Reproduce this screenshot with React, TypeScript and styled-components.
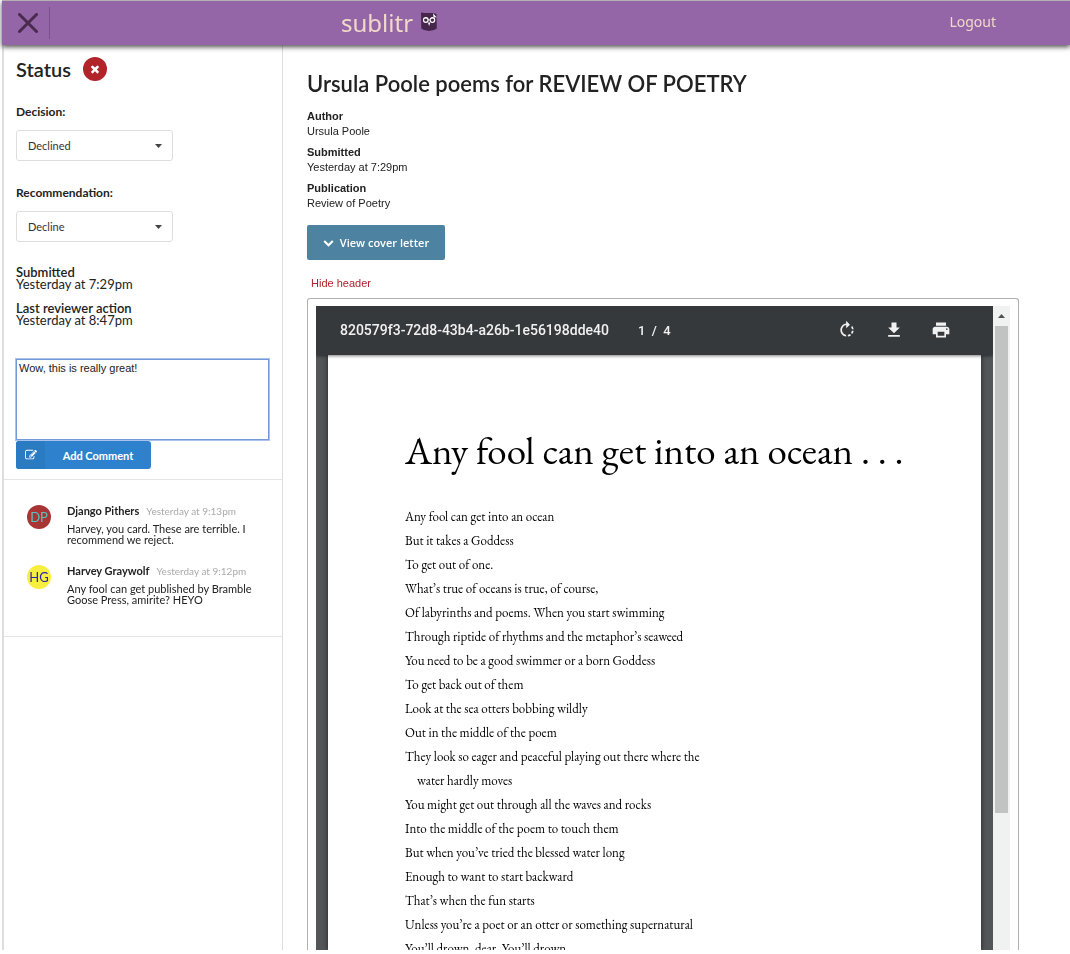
import React, { useEffect, useRef, useState } from "react";
import styled, { createGlobalStyle } from "styled-components";

const GlobalStyle = createGlobalStyle`
  *, *::before, *::after { box-sizing: border-box; }
  body {
    margin: 0;
    background: #fff;
    color: #222;
    font-family: Lato, sans-serif;
    font-size: 11px;
  }
  h1, h2, h3, p, dl, dt, dd, ul { margin: 0; padding: 0; }
  ul { list-style: none; }
  button { border: 0; padding: 0; background: none; color: inherit; font: inherit; cursor: pointer; }
`;

const Page = styled.div`
  display: flex;
  flex-direction: column;
  height: 100vh;
  padding: 0 0 4px 2px;
  overflow: hidden;
`;

const TopBar = styled.header`
  flex: none;
  z-index: 1;
  display: grid;
  grid-template-columns: 339px 1fr auto;
  align-items: center;
  height: 45px;
  padding-right: 74px;
  border-top: 1px solid #b3b0b3;
  background: #9466a8;
  box-shadow: 0 2px 5px rgba(0, 0, 0, 0.7);
  color: #f1d9c9;
  font-family: "Noto Sans", sans-serif;
`;

const CloseButton = styled.button`
  display: flex;
  align-items: center;
  justify-self: start;
  width: 48px;
  height: 32px;
  padding-left: 16px;
  border-right: 1px solid #7b4f8d;
  color: #4a2a4f;
`;

const Brand = styled.a`
  display: flex;
  align-items: center;
  gap: 8px;
  color: inherit;
  font-size: 24px;
  line-height: 32px;
  text-decoration: none;

  > svg { margin-bottom: 4px; }
`;

const LogoutLink = styled.a`
  padding-bottom: 4px;
  color: inherit;
  font-size: 14px;
  text-decoration: none;
`;

const Body = styled.div`
  flex: 1;
  min-height: 0;
  display: flex;
`;

const Sidebar = styled.aside`
  flex: none;
  width: 281px;
  border-left: 2px solid #dededf;
  border-right: 1px solid #dededf;
`;

const SidebarSection = styled.section`
  padding: 11px 12px 10px;
  border-bottom: 1px solid #e4e5e6;
`;

const StatusRow = styled.div`
  display: flex;
  align-items: center;
  gap: 12px;
  height: 26px;
`;

const StatusTitle = styled.h2`
  font-size: 20px;
  font-weight: 600;
  line-height: 24px;
`;

const StatusBadge = styled.span`
  display: flex;
  align-items: center;
  justify-content: center;
  width: 24px;
  height: 24px;
  border-radius: 50%;
  background: #b0242a;
  color: #fff;
`;

const Fields = styled.div`
  display: flex;
  flex-direction: column;
  gap: 24px;
  padding: 22px 0 24px;
`;

const Field = styled.div`
  display: flex;
  flex-direction: column;
  align-items: flex-start;
  gap: 10px;
`;

const FieldLabel = styled.label`
  font-size: 12px;
  font-weight: 700;
  line-height: 16px;
`;

const SelectBox = styled.div`
  display: grid;
  align-items: center;
  width: 157px;
  height: 31px;

  > * { grid-area: 1 / 1; }
  > svg { justify-self: end; margin-right: 11px; pointer-events: none; }
`;

const Select = styled.select`
  appearance: none;
  width: 100%;
  height: 100%;
  padding: 0 11px;
  border: 1px solid #dededf;
  border-radius: 3px;
  background: #fff;
  color: #333;
  font-family: Lato, sans-serif;
  font-size: 11px;
`;

const Dates = styled.dl`
  display: flex;
  flex-direction: column;
  gap: 12px;
  margin-bottom: 33px;
  font-size: 13px;
  line-height: 12px;

  dt { font-weight: 600; }
`;

const CommentForm = styled.form`
  display: flex;
  flex-direction: column;
  align-items: flex-start;
  gap: 1px;
`;

const CommentBox = styled.textarea`
  display: block;
  width: 253px;
  height: 81px;
  padding: 1px 2px;
  border: 1px solid #7499d9;
  box-shadow: 0 0 0 1px #a9c3ee;
  outline: 0;
  resize: none;
  color: #222;
  font-family: "Liberation Sans", Arial, sans-serif;
  font-size: 11px;
  line-height: 14px;
`;

const AddButton = styled.button`
  display: flex;
  width: 135px;
  height: 28px;
  border-radius: 3px;
  overflow: hidden;
  background: #2e82cd;
  color: #fff;
  font-weight: 700;

  > span {
    display: flex;
    align-items: center;
    justify-content: center;
  }
`;

const AddIcon = styled.span`
  width: 29px;
  background: #2b7bc3;
`;

const AddText = styled.span`
  flex: 1;
`;

const Comments = styled.ul`
  display: flex;
  flex-direction: column;
  gap: 18px;
  padding: 23px 20px 31px 23px;
  border-bottom: 1px solid #e4e5e6;
`;

const Comment = styled.li`
  display: flex;
  align-items: flex-start;
  gap: 16px;
`;

const Avatar = styled.span<{ $bg: string; $fg: string }>`
  flex: none;
  width: 24px;
  margin-top: 2px;
  border-radius: 50%;
  background: ${(p) => p.$bg};
  color: ${(p) => p.$fg};
  font-size: 13px;
  line-height: 24px;
  text-align: center;
`;

const CommentHead = styled.div`
  display: flex;
  align-items: baseline;
  gap: 7px;
  line-height: 16px;
  white-space: nowrap;
`;

const CommentTime = styled.time`
  color: #aaa;
  font-size: 10px;
`;

const CommentText = styled.p`
  margin-top: 4px;
  line-height: 11px;
`;

const Main = styled.main`
  flex: 1;
  min-width: 0;
  display: flex;
  flex-direction: column;
  align-items: flex-start;
  padding: 23px 51px 0 24px;
  font-family: "Liberation Sans", Arial, sans-serif;
`;

const Title = styled.h1`
  font-family: Lato, sans-serif;
  font-size: 22px;
  line-height: 32px;
  font-weight: 600;
`;

const Details = styled.dl`
  display: flex;
  flex-direction: column;
  gap: 6px;
  margin: 9px 0 14px;
  line-height: 15px;

  dt { font-weight: 700; }
`;

const LetterButton = styled.button`
  flex: none;
  display: flex;
  align-items: center;
  justify-content: center;
  gap: 6px;
  width: 138px;
  height: 35px;
  border-radius: 2px;
  background: #4d82a1;
  color: #fff;
  font-family: "Open Sans", sans-serif;
  font-weight: 600;
`;

const HideButton = styled.button`
  margin: 15px 0 7px 4px;
  color: #b0242a;
  line-height: 16px;
`;

const Frame = styled.div`
  flex: 1;
  align-self: stretch;
  min-height: 0;
  display: flex;
  padding: 7px 8px 0;
  border: 1px solid #b0b0b0;
  border-bottom: 0;
  border-radius: 3px 3px 0 0;
`;

const Viewer = styled.div`
  flex: 1;
  min-width: 0;
  display: flex;
  flex-direction: column;
  overflow: hidden;
  background: #525659;
`;

const Toolbar = styled.div`
  flex: none;
  z-index: 1;
  display: flex;
  align-items: center;
  height: 49px;
  padding: 0 42px 1px 24px;
  background: #36393c;
  box-shadow: 0 1px 3px rgba(0, 0, 0, 0.5);
  color: #f1f1f1;
  font-family: Roboto, sans-serif;
  font-size: 14px;
`;

const FileName = styled.span`
  font-weight: 500;
`;

const PageCount = styled.span`
  margin-left: 29px;
  font-size: 13px;
  font-weight: 500;
  white-space: pre;
`;

const Tools = styled.div`
  display: flex;
  gap: 27px;
  margin-left: auto;

  button, svg { display: block; }
`;

const Sheet = styled.article`
  flex: 1;
  min-height: 0;
  margin: 0 12px;
  padding: 76px 77px 0;
  overflow: hidden;
  background: #fff;
  box-shadow: 0 0 5px rgba(0, 0, 0, 0.6);
  color: #000;
  font-family: "EB Garamond", Garamond, "Liberation Serif", serif;
  white-space: nowrap;
`;

const PoemTitle = styled.h2`
  margin-bottom: 34px;
  font-size: 39px;
  font-weight: 400;
  line-height: 40px;
`;

const Line = styled.p<{ $indent?: boolean }>`
  padding-left: ${(p) => (p.$indent ? 12 : 0)}px;
  font-size: 13px;
  line-height: 24px;
`;

const Scrollbar = styled.div`
  flex: none;
  display: flex;
  flex-direction: column;
  align-items: center;
  width: 17px;
  background: #f0f1f1;
`;

const ScrollUp = styled.button`
  display: flex;
  align-items: center;
  justify-content: center;
  width: 100%;
  height: 20px;
`;

const Thumb = styled.div`
  width: 13px;
  height: 487px;
  background: #c1c2c2;
`;

const TIMES =
  "M1490 1322q0 40-28 68l-136 136q-28 28-68 28t-68-28l-294-294-294 294q-28 28-68 28t-68-28l-136-136q-28-28-28-68t28-68l294-294-294-294q-28-28-28-68t28-68l136-136q28-28 68-28t68 28l294 294 294-294q28-28 68-28t68 28l136 136q28 28 28 68t-28 68l-294 294 294 294q28 28 28 68z";
const CHEVRON =
  "M1683 808l-742 741q-19 19-45 19t-45-19l-742-741q-19-19-19-45.5t19-45.5l166-165q19-19 45-19t45 19l531 531 531-531q19-19 45-19t45 19l166 165q19 19 19 45.5t-19 45.5z";
const EDIT =
  "M888 1184l116-116-152-152-116 116v56h96v96h56zm440-720q-16-16-33 1l-350 350q-17 17-1 33t33-1l350-350q17-17 1-33zm80 594v190q0 119-84.5 203.5t-203.5 84.5h-832q-119 0-203.5-84.5t-84.5-203.5v-832q0-119 84.5-203.5t203.5-84.5h832q63 0 117 25 15 7 18 23 3 17-9 29l-49 49q-14 14-32 8-23-6-45-6h-832q-66 0-113 47t-47 113v832q0 66 47 113t113 47h832q66 0 113-47t47-113v-126q0-13 9-22l64-64q15-15 35-7t20 29zm-96-738l288 288-672 672h-288v-288zm444 132l-92 92-288-288 92-92q28-28 68-28t68 28l152 152q28 28 28 68t-28 68z";
const ROTATE =
  "M15.55 5.55L11 1v3.07C7.06 4.56 4 7.92 4 12s3.05 7.44 7 7.93v-2.02c-2.84-.48-5-2.94-5-5.91s2.16-5.43 5-5.91V10l4.55-4.45zM19.93 11c-.17-1.39-.72-2.73-1.62-3.89l-1.42 1.42c.54.75.88 1.6 1.02 2.47h2.02zM13 17.9v2.02c1.39-.17 2.74-.71 3.9-1.61l-1.44-1.44c-.75.54-1.59.89-2.46 1.03zm3.89-2.42l1.42 1.41c.9-1.16 1.45-2.5 1.62-3.89h-2.02c-.14.87-.48 1.72-1.02 2.48z";
const DOWNLOAD = "M19 9h-4V3H9v6H5l7 7 7-7zM5 18v2h14v-2H5z";
const PRINT =
  "M19 8H5c-1.66 0-3 1.34-3 3v6h4v4h12v-4h4v-6c0-1.66-1.34-3-3-3zm-3 11H8v-5h8v5zm3-7c-.55 0-1-.45-1-1s.45-1 1-1 1 .45 1 1-.45 1-1 1zm-1-9H6v4h12V3z";

function Icon({ d, size, box = 24 }: { d: string; size: number; box?: number }) {
  return (
    <svg width={size} height={size} viewBox={`0 0 ${box} ${box}`} fill="currentColor" aria-hidden="true">
      <path d={d} />
    </svg>
  );
}

function Owl() {
  return (
    <svg width="16" height="19" viewBox="0 0 16 19" aria-hidden="true">
      <path d="M0 .6 4 1h8l3.500 1 .3 14.500L13 18l-5 1-5-1-2.700-1.500z" fill="#46264b" />
      <path d="M12 1.200 15.800 5.600 12.500 5z" fill="#fff" />
      <g fill="none" stroke="#fff" strokeWidth="1.200">
        <circle cx="4.800" cy="8" r="2.300" />
        <circle cx="11.400" cy="8" r="2.300" />
        <path d="M2 6.300 6 6.100 8 8.500 10 6.100 14 6.300" strokeWidth=".6" />
      </g>
      <path d="M6.900 10.500h2.400L8.100 14z" fill="#fff" />
    </svg>
  );
}

function Dropdown({ id, label, options }: { id: string; label: string; options: string[] }) {
  return (
    <Field>
      <FieldLabel htmlFor={id}>{label}</FieldLabel>
      <SelectBox>
        <Select id={id} defaultValue={options[0]}>
          {options.map((o) => (
            <option key={o}>{o}</option>
          ))}
        </Select>
        <svg width="7" height="4" viewBox="0 0 7 4" aria-hidden="true">
          <path d="M0 0h7L3.500 4z" fill="#444" />
        </svg>
      </SelectBox>
    </Field>
  );
}

const comments = [
  { initials: "DP", bg: "#a93434", fg: "#58c4c0", name: "Django Pithers", time: "Yesterday at 9:13pm", text: "Harvey, you card. These are terrible. I recommend we reject." },
  { initials: "HG", bg: "#f8ee40", fg: "#2c1fb5", name: "Harvey Graywolf", time: "Yesterday at 9:12pm", text: "Any fool can get published by Bramble Goose Press, amirite? HEYO" },
];

const details = [
  ["Author", "Ursula Poole"],
  ["Submitted", "Yesterday at 7:29pm"],
  ["Publication", "Review of Poetry"],
];

const poem = [
  "Any fool can get into an ocean",
  "But it takes a Goddess",
  "To get out of one.",
  "What’s true of oceans is true, of course,",
  "Of labyrinths and poems. When you start swimming",
  "Through riptide of rhythms and the metaphor’s seaweed",
  "You need to be a good swimmer or a born Goddess",
  "To get back out of them",
  "Look at the sea otters bobbing wildly",
  "Out in the middle of the poem",
  "They look so eager and peaceful playing out there where the",
  ">water hardly moves",
  "You might get out through all the waves and rocks",
  "Into the middle of the poem to touch them",
  "But when you’ve tried the blessed water long",
  "Enough to want to start backward",
  "That’s when the fun starts",
  "Unless you’re a poet or an otter or something supernatural",
  "You’ll drown, dear. You’ll drown",
];

export default function App() {
  const [draft, setDraft] = useState("Wow, this is really great!");
  const box = useRef<HTMLTextAreaElement>(null);

  useEffect(() => {
    const el = box.current;
    if (el) {
      el.focus();
      el.setSelectionRange(el.value.length, el.value.length);
    }
  }, []);

  return (
    <Page>
      <GlobalStyle />
      <TopBar>
        <CloseButton aria-label="Close">
          <svg width="20" height="20" viewBox="0 0 20 20" fill="none" stroke="currentColor" strokeWidth="3" strokeLinecap="round" aria-hidden="true">
            <path d="M1.500 1.500l17 17M18.500 1.500l-17 17" />
          </svg>
        </CloseButton>
        <Brand href="#">
          sublitr
          <Owl />
        </Brand>
        <LogoutLink href="#">Logout</LogoutLink>
      </TopBar>
      <Body>
        <Sidebar>
          <SidebarSection>
            <StatusRow>
              <StatusTitle>Status</StatusTitle>
              <StatusBadge>
                <Icon d={TIMES} size={12} box={1792} />
              </StatusBadge>
            </StatusRow>
            <Fields>
              <Dropdown id="decision" label="Decision:" options={["Declined", "Accepted", "Pending"]} />
              <Dropdown id="recommendation" label="Recommendation:" options={["Decline", "Accept"]} />
            </Fields>
            <Dates>
              <div>
                <dt>Submitted</dt>
                <dd>Yesterday at 7:29pm</dd>
              </div>
              <div>
                <dt>Last reviewer action</dt>
                <dd>Yesterday at 8:47pm</dd>
              </div>
            </Dates>
            <CommentForm onSubmit={(e) => e.preventDefault()}>
              <CommentBox ref={box} aria-label="Comment" spellCheck={false} value={draft} onChange={(e) => setDraft(e.target.value)} />
              <AddButton type="submit">
                <AddIcon>
                  <Icon d={EDIT} size={12} box={1792} />
                </AddIcon>
                <AddText>Add Comment</AddText>
              </AddButton>
            </CommentForm>
          </SidebarSection>
          <Comments>
            {comments.map((c) => (
              <Comment key={c.initials}>
                <Avatar $bg={c.bg} $fg={c.fg}>{c.initials}</Avatar>
                <div>
                  <CommentHead>
                    <strong>{c.name}</strong>
                    <CommentTime>{c.time}</CommentTime>
                  </CommentHead>
                  <CommentText>{c.text}</CommentText>
                </div>
              </Comment>
            ))}
          </Comments>
        </Sidebar>
        <Main>
          <Title>Ursula Poole poems for REVIEW OF POETRY</Title>
          <Details>
            {details.map(([term, value]) => (
              <div key={term}>
                <dt>{term}</dt>
                <dd>{value}</dd>
              </div>
            ))}
          </Details>
          <LetterButton>
            <Icon d={CHEVRON} size={11} box={1792} />
            View cover letter
          </LetterButton>
          <HideButton>Hide header</HideButton>
          <Frame>
            <Viewer>
              <Toolbar>
                <FileName>820579f3-72d8-43b4-a26b-1e56198dde40</FileName>
                <PageCount>{"1  /  4"}</PageCount>
                <Tools>
                  <button aria-label="Rotate"><Icon d={ROTATE} size={20} /></button>
                  <button aria-label="Download"><Icon d={DOWNLOAD} size={20} /></button>
                  <button aria-label="Print"><Icon d={PRINT} size={20} /></button>
                </Tools>
              </Toolbar>
              <Sheet>
                <PoemTitle>Any fool can get into an ocean . . .</PoemTitle>
                {poem.map((l) => (
                  <Line key={l} $indent={l.startsWith(">")}>{l.replace(">", "")}</Line>
                ))}
              </Sheet>
            </Viewer>
            <Scrollbar>
              <ScrollUp aria-label="Scroll up">
                <svg width="7" height="4" viewBox="0 0 7 4" aria-hidden="true">
                  <path d="M0 4h7L3.500 0z" fill="#505050" />
                </svg>
              </ScrollUp>
              <Thumb />
            </Scrollbar>
          </Frame>
        </Main>
      </Body>
    </Page>
  );
}
